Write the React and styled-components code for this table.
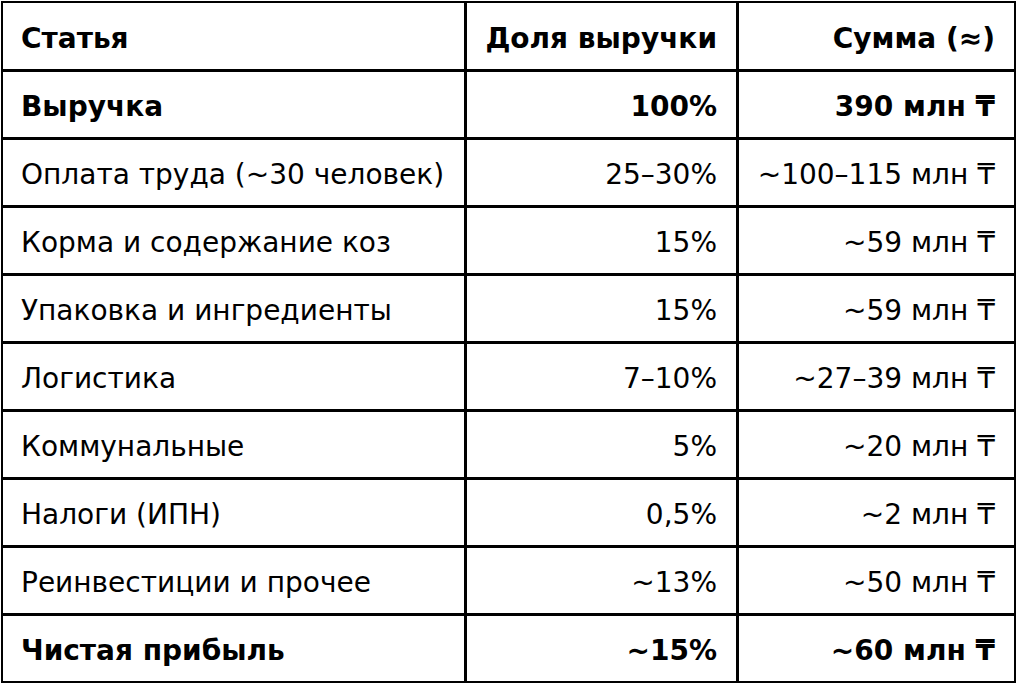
import React from 'react';
import styled, { createGlobalStyle } from 'styled-components';

const GlobalStyle = createGlobalStyle`
  html, body {
    margin: 0;
    padding: 0;
    background: #FFFFFF;
  }
  body {
    font-family: 'DejaVu Sans', 'Noto Sans', sans-serif;
    color: #000000;
  }
`;

const Page = styled.div`
  padding: 1px 0 0 1px;
`;

const Table = styled.table`
  width: 1015px;
  table-layout: fixed;
  border-collapse: separate;
  border-spacing: 0;
  border-left: 2px solid #000;
  border-top: 2px solid #000;
  font-size: 28px;
`;

const Row = styled.tr`
  height: ${(p) => (p.$first ? 69 : p.$last ? 67 : 68)}px;
`;

const Cell = styled.td`
  box-sizing: border-box;
  padding: 5px 19px 0 18px;
  border-right: ${(p) => (p.$edge ? 2 : 3)}px solid #000;
  border-bottom: ${(p) => (p.$bottom ? 2 : 3)}px solid #000;
  text-align: ${(p) => (p.$right ? 'right' : 'left')};
  font-weight: ${(p) => (p.$bold ? 700 : 400)};
  white-space: nowrap;
  vertical-align: middle;
  line-height: 1;
`;

const rows = [
  ['Выручка', '100%', '390 млн ₸', true],
  ['Оплата труда (~30 человек)', '25–30%', '~100–115 млн ₸'],
  ['Корма и содержание коз', '15%', '~59 млн ₸'],
  ['Упаковка и ингредиенты', '15%', '~59 млн ₸'],
  ['Логистика', '7–10%', '~27–39 млн ₸'],
  ['Коммунальные', '5%', '~20 млн ₸'],
  ['Налоги (ИПН)', '0,5%', '~2 млн ₸'],
  ['Реинвестиции и прочее', '~13%', '~50 млн ₸'],
  ['Чистая прибыль', '~15%', '~60 млн ₸', true],
];

export default function App() {
  return (
    <>
      <GlobalStyle />
      <Page>
        <Table>
          <colgroup>
            <col style={{ width: 464 }} />
            <col style={{ width: 272 }} />
            <col style={{ width: 277 }} />
          </colgroup>
          <thead>
            <Row $first>
              <Cell as="th" $bold>Статья</Cell>
              <Cell as="th" $bold $right>Доля выручки</Cell>
              <Cell as="th" $bold $right $edge>Сумма (≈)</Cell>
            </Row>
          </thead>
          <tbody>
            {rows.map(([name, share, sum, bold], i) => {
              const last = i === rows.length - 1;
              return (
                <Row key={name} $last={last}>
                  <Cell $bold={bold} $bottom={last}>{name}</Cell>
                  <Cell $bold={bold} $bottom={last} $right>{share}</Cell>
                  <Cell $bold={bold} $bottom={last} $right $edge>{sum}</Cell>
                </Row>
              );
            })}
          </tbody>
        </Table>
      </Page>
    </>
  );
}
